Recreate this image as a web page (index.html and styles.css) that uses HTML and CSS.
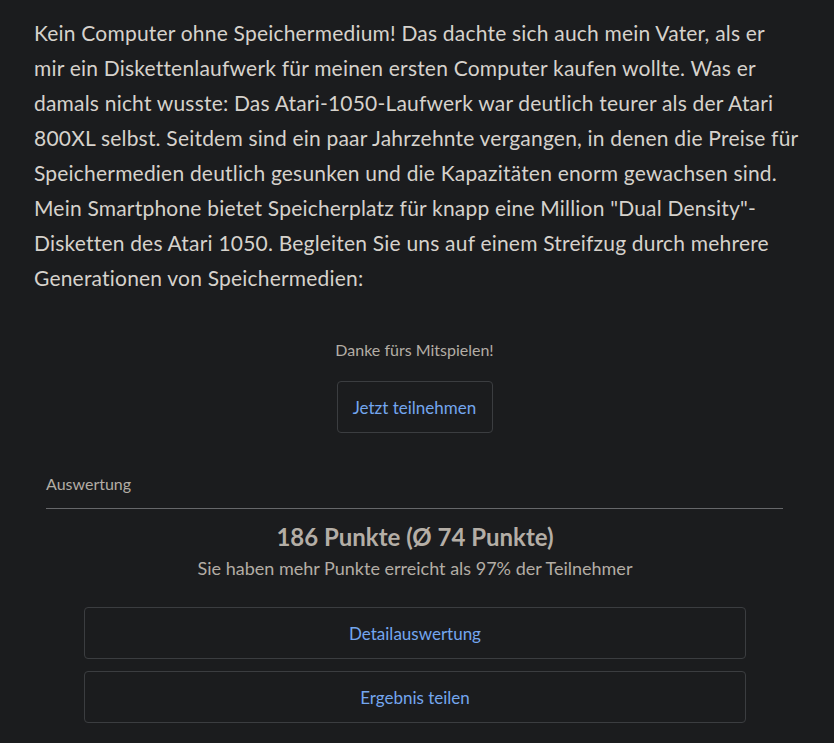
FILE: index.html
```html
<!DOCTYPE html>
<html lang="de">
<head>
<meta charset="utf-8">
<link rel="stylesheet" href="styles.css">
</head>
<body>
<main class="page">
  <p class="intro">Kein Computer ohne Speichermedium! Das dachte sich auch mein Vater, als er<br>mir ein Diskettenlaufwerk für meinen ersten Computer kaufen wollte. Was er<br>damals nicht wusste: Das Atari-1050-Laufwerk war deutlich teurer als der Atari<br>800XL selbst. Seitdem sind ein paar Jahrzehnte vergangen, in denen die Preise für<br>Speichermedien deutlich gesunken und die Kapazitäten enorm gewachsen sind.<br>Mein Smartphone bietet Speicherplatz für knapp eine Million "Dual Density"-<br>Disketten des Atari 1050. Begleiten Sie uns auf einem Streifzug durch mehrere<br>Generationen von Speichermedien:</p>

  <section class="quiz">
    <p class="thanks">Danke fürs Mitspielen!</p>
    <a class="btn btn-small" href="#">Jetzt teilnehmen</a>
  </section>

  <section class="result">
    <h2 class="result-title">Auswertung</h2>
    <div class="result-body">
      <p class="score">186 Punkte (Ø 74 Punkte)</p>
      <p class="rank">Sie haben mehr Punkte erreicht als 97% der Teilnehmer</p>
      <div class="actions">
        <a class="btn btn-wide" href="#">Detailauswertung</a>
        <a class="btn btn-wide" href="#">Ergebnis teilen</a>
      </div>
    </div>
  </section>
</main>
</body>
</html>
```
FILE: styles.css
```css
html, body {
  margin: 0;
  padding: 0;
  background: #1b1c1e;
}
body {
  font-family: Lato, "Noto Sans", sans-serif;
  color: #d6d2cc;
}
.page {
  padding: 15px 39px 20px 34px;
}
.intro {
  margin: 0;
  font-size: 21px;
  letter-spacing: 0.2px;
  line-height: 35px;
  white-space: nowrap;
  color: #d6d2cc;
}
.quiz {
  display: flex;
  flex-direction: column;
  align-items: center;
  padding-top: 43px;
}
.thanks {
  margin: 0;
  font-size: 16px;
  line-height: 24px;
  color: #b3ada5;
}
.btn {
  display: flex;
  align-items: center;
  justify-content: center;
  box-sizing: border-box;
  height: 52px;
  border: 1px solid #3b3d40;
  border-radius: 4px;
  color: #74a6ee;
  text-decoration: none;
  font-size: 17px;
}
.btn-small {
  margin-top: 19px;
  width: 156px;
}
.result {
  padding: 39px 12px 0 12px;
}
.result-title {
  margin: 0;
  font-size: 16px;
  font-weight: 400;
  line-height: 24px;
  color: #b3ada5;
  padding-bottom: 12px;
  border-bottom: 1px solid #66676a;
}
.result-body {
  display: flex;
  flex-direction: column;
  align-items: center;
  padding: 12px 37px 0 38px;
}
.score {
  margin: 0;
  font-size: 24px;
  font-weight: 700;
  line-height: 32px;
  color: #b4aea6;
}
.rank {
  margin: 2px 0 0;
  font-size: 18px;
  line-height: 26px;
  color: #b3ada5;
}
.actions {
  align-self: stretch;
  display: flex;
  flex-direction: column;
  gap: 12px;
  margin-top: 26px;
}
.btn-wide {
  width: 100%;
}
```
